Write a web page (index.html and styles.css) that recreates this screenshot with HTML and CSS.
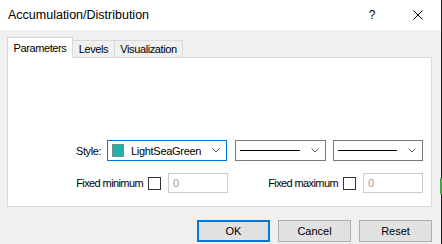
FILE: index.html
```html
<!DOCTYPE html>
<html lang="en">
<head>
    <meta charset="UTF-8">
    <title>Accumulation/Distribution</title>
    <link rel="stylesheet" href="styles.css">
</head>
<body>
    <div class="dialog">
        <div class="titlebar">
            <span class="title">Accumulation/Distribution</span>
            <span class="caption-btn">?</span>
            <span class="caption-btn">
                <svg width="10" height="10" viewBox="0 0 10 10">
                    <path d="M0.5 0.5 L9.5 9.5 M9.5 0.5 L0.5 9.5" stroke="#000" stroke-width="1" fill="none"/>
                </svg>
            </span>
        </div>

        <div class="content">
            <div class="tabs">
                <div class="tab active tab-params">Parameters</div>
                <div class="tab tab-levels">Levels</div>
                <div class="tab tab-vis">Visualization</div>
            </div>

            <div class="panel">
                <div class="style-row">
                    <span class="label style-label">Style:</span>
                    <div class="combo combo-color focused">
                        <span class="swatch"></span>
                        <span class="combo-text">LightSeaGreen</span>
                        <svg class="chevron" width="8" height="5" viewBox="0 0 8 5"><polyline points="0.5,0.5 4,4 7.5,0.5" fill="none" stroke="#606060"/></svg>
                    </div>
                    <div class="combo combo-width">
                        <span class="line-sample"></span>
                        <svg class="chevron" width="8" height="5" viewBox="0 0 8 5"><polyline points="0.5,0.5 4,4 7.5,0.5" fill="none" stroke="#606060"/></svg>
                    </div>
                    <div class="combo combo-dash">
                        <span class="line-sample"></span>
                        <svg class="chevron" width="8" height="5" viewBox="0 0 8 5"><polyline points="0.5,0.5 4,4 7.5,0.5" fill="none" stroke="#606060"/></svg>
                    </div>
                </div>

                <div class="fixed-row">
                    <span class="label fixed-min">Fixed minimum</span>
                    <span class="checkbox"></span>
                    <span class="num-input">0</span>
                    <span class="label fixed-max">Fixed maximum</span>
                    <span class="checkbox"></span>
                    <span class="num-input">0</span>
                </div>
            </div>

            <div class="buttons">
                <button class="btn default">OK</button>
                <button class="btn">Cancel</button>
                <button class="btn">Reset</button>
            </div>
        </div>
    </div>
</body>
</html>
```

FILE: styles.css
```css
body {
    margin: 0;
    font-family: "Liberation Sans", Arial, sans-serif;
    font-size: 11px;
    color: #000;
    background-color: #f0f0f0;
}
.dialog {
    position: relative;
    width: 441px;
    height: 244px;
    border-right: 1px solid #1e1e1e;
    display: flex;
    flex-direction: column;
}
.dialog::after {
    content: "";
    position: absolute;
    right: -1px;
    top: 178px;
    width: 2px;
    height: 16px;
    background-color: #3aa845;
}
.titlebar {
    height: 30px;
    background-color: #fff;
    display: flex;
    align-items: center;
}
.title {
    flex: 1;
    padding-left: 8px;
    font-size: 12.5px;
}
.caption-btn {
    width: 46px;
    height: 30px;
    display: flex;
    align-items: center;
    justify-content: center;
    font-size: 12px;
}
.content {
    flex: 1;
    padding: 7px 9px 0 7px;
}
.tabs {
    display: flex;
    align-items: flex-end;
    height: 20px;
}
.tab {
    box-sizing: border-box;
    height: 17px;
    border: 1px solid #d9d9d9;
    border-bottom: none;
    background-color: #f0f0f0;
    margin-left: -1px;
    display: flex;
    align-items: center;
    justify-content: center;
    letter-spacing: -0.4px;
}
.tab.active {
    height: 21px;
    margin-left: 0;
    margin-bottom: -1px;
    background-color: #fff;
    position: relative;
    z-index: 1;
    padding-bottom: 1px;
}
.tab-params { width: 66px; }
.tab-levels { width: 43px; }
.tab-vis { width: 69px; }
.panel {
    box-sizing: border-box;
    height: 150px;
    border: 1px solid #d9d9d9;
    background-color: #fff;
    padding-top: 82px;
}
.label {
    letter-spacing: -0.4px;
}
.style-row {
    display: flex;
    align-items: center;
    padding-left: 68px;
}
.style-label {
    width: 31px;
}
.combo {
    box-sizing: border-box;
    height: 21px;
    border: 1px solid #7a7a7a;
    display: flex;
    align-items: center;
    padding: 0 6px 0 4px;
}
.combo.focused {
    border-color: #0078d7;
}
.combo-color { width: 120px; }
.combo-width { width: 91px; margin-left: 8px; }
.combo-dash { width: 90px; margin-left: 7px; }
.swatch {
    box-sizing: border-box;
    width: 12px;
    height: 13px;
    background-color: #20b2aa;
    border: 1px solid #6f8f8d;
}
.combo-text {
    flex: 1;
    margin-left: 7px;
    letter-spacing: -0.3px;
}
.line-sample {
    flex: 1;
    height: 1px;
    background-color: #000;
    margin-right: 11px;
}
.chevron {
    display: block;
}
.fixed-row {
    display: flex;
    align-items: center;
    margin-top: 12px;
}
.fixed-min {
    width: 135px;
    text-align: right;
    letter-spacing: -0.6px;
}
.fixed-max {
    width: 110px;
    text-align: right;
    letter-spacing: -0.6px;
}
.checkbox {
    box-sizing: border-box;
    width: 13px;
    height: 13px;
    border: 1px solid #333;
    background-color: #fff;
    margin: 0 7px 0 5px;
}
.num-input {
    box-sizing: border-box;
    width: 60px;
    height: 20px;
    border: 1px solid #cccccc;
    color: #a0a0a0;
    padding-left: 4px;
    display: flex;
    align-items: center;
}
.buttons {
    display: flex;
    justify-content: flex-end;
    gap: 8px;
    margin-top: 13px;
}
.btn {
    box-sizing: border-box;
    width: 73px;
    height: 22px;
    border: 1px solid #adadad;
    background-color: #e1e1e1;
    font-family: inherit;
    font-size: 11px;
    color: #000;
    padding: 0;
}
.btn.default {
    border-color: #0078d7;
    box-shadow: inset 0 0 0 1px #0078d7;
}
```
